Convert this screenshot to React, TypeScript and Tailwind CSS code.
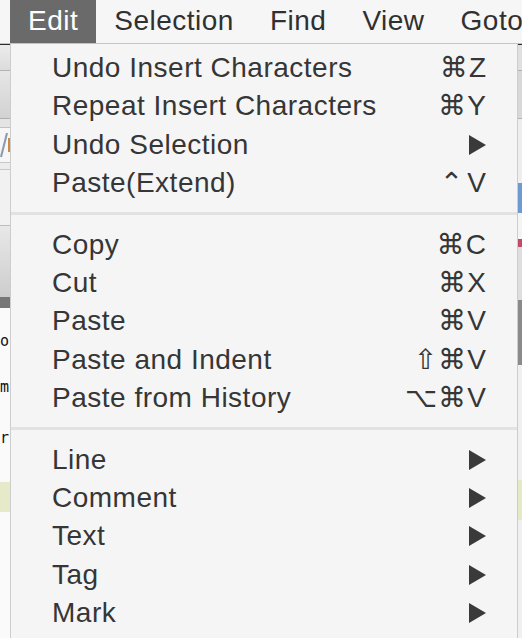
type Item = { label: string; keys?: string[]; sub?: boolean } | "sep";

const items: Item[] = [
  { label: "Undo Insert Characters", keys: ["⌘", "Z"] },
  { label: "Repeat Insert Characters", keys: ["⌘", "Y"] },
  { label: "Undo Selection", sub: true },
  { label: "Paste(Extend)", keys: ["⌃", "V"] },
  "sep",
  { label: "Copy", keys: ["⌘", "C"] },
  { label: "Cut", keys: ["⌘", "X"] },
  { label: "Paste", keys: ["⌘", "V"] },
  { label: "Paste and Indent", keys: ["⇧", "⌘", "V"] },
  { label: "Paste from History", keys: ["⌥", "⌘", "V"] },
  "sep",
  { label: "Line", sub: true },
  { label: "Comment", sub: true },
  { label: "Text", sub: true },
  { label: "Tag", sub: true },
  { label: "Mark", sub: true },
];

const bar = ["Edit", "Selection", "Find", "View", "Goto"];

function Arrow() {
  return (
    <svg width="17" height="20" viewBox="0 0 17 20" className="block">
      <polygon points="0,0 17,10 0,20" fill="#3a3a3a" />
    </svg>
  );
}

function MenuBar() {
  return (
    <div className="h-[44px] shrink-0 flex border-b border-[#c4c4c4] bg-[#f6f6f6] pl-[10px]">
      {bar.map((name, i) => (
        <div
          key={name}
          className={
            i === 0
              ? "px-[18px] leading-[41px] text-white bg-[#6a6a6a] whitespace-nowrap"
              : "px-[18px] leading-[41px] text-[#303030] whitespace-nowrap"
          }
        >
          {name}
        </div>
      ))}
    </div>
  );
}

function LeftStrip() {
  return (
    <div className="w-[10px] shrink-0 flex flex-col overflow-hidden font-['DejaVu_Sans_Mono',monospace] tracking-normal">
      <div className="h-[1px] bg-[#2a2a2a]" />
      <div className="h-[25px] bg-gradient-to-b from-[#ececec] to-[#dcdcdc]" />
      <div className="h-[1px] bg-[#b4b4b4]" />
      <div className="h-[47px] bg-gradient-to-b from-[#e6e6e6] to-[#d2d2d2]" />
      <div className="h-[1px] bg-[#b0b0b0]" />
      <div className="h-[8px] bg-[#e4e4e4]" />
      <div className="h-[1px] bg-[#c2c2c2]" />
      <div className="h-[34px] bg-[#f6f6f6] flex items-center">
        <svg width="8" height="28" viewBox="0 0 8 28" className="block">
          <line x1="7" y1="2" x2="1" y2="26" stroke="#8a9ab0" strokeWidth="2" />
        </svg>
        <span className="w-[2px] h-[14px] bg-[#c98a4a]" />
      </div>
      <div className="h-[1px] bg-[#c8c8c8]" />
      <div className="h-[6px] bg-[#ececec]" />
      <div className="h-[1px] bg-[#c8c8c8]" />
      <div className="h-[55px] bg-[#f1f1f1]" />
      <div className="h-[1px] bg-[#bdbdbd]" />
      <div className="h-[71px] bg-gradient-to-b from-[#e8e8e8] to-[#cdcdcd]" />
      <div className="h-[11px] bg-[#777777]" />
      <div className="flex-1 bg-[#fafafa] flex flex-col text-[15px] leading-none text-[#111]">
        <div className="h-[26px]" />
        <span>o</span>
        <div className="h-[31px]" />
        <span>m</span>
        <div className="h-[36px]" />
        <span>r</span>
        <div className="h-[36px]" />
        <div className="h-[30px] bg-[#e7eac8]" />
      </div>
    </div>
  );
}

function RightStrip() {
  return (
    <div className="w-[4px] shrink-0 flex flex-col overflow-hidden">
      <div className="h-[1px] bg-[#2a2a2a]" />
      <div className="h-[25px] bg-[#e0e0e0]" />
      <div className="h-[1px] bg-[#b4b4b4]" />
      <div className="h-[47px] bg-[#d8d8d8]" />
      <div className="h-[1px] bg-[#b0b0b0]" />
      <div className="h-[64px] bg-[#eeeeee]" />
      <div className="h-[30px] bg-[#6f9ad0]" />
      <div className="h-[26px] bg-[#f4f4f4]" />
      <div className="h-[8px] bg-[#c24a6a]" />
      <div className="h-[53px] bg-[#dedede]" />
      <div className="h-[65px] bg-[#8a8a8a]" />
      <div className="h-[115px] bg-[#f0f0f0]" />
      <div className="h-[40px] bg-[#e6e9c6]" />
      <div className="flex-1 bg-[#f0f0f0]" />
    </div>
  );
}

function Menu() {
  return (
    <div className="w-[508px] shrink-0 bg-[#f5f5f5] border-l border-r border-[#cdcdcd] pt-[5px]">
      {items.map((it, i) =>
        it === "sep" ? (
          <div key={i} className="h-[23.5px] flex items-center">
            <div className="w-full h-[3px] bg-[#e2e2e2]" />
          </div>
        ) : (
          <div
            key={i}
            className="h-[38.3px] leading-[38.3px] flex items-center justify-between pl-[41px] pr-[31px] text-[#363636]"
          >
            <span className="whitespace-nowrap">{it.label}</span>
            {it.sub ? (
              <Arrow />
            ) : (
              <span className="flex items-center whitespace-nowrap tracking-normal">
                {it.keys?.map((k, j) => (
                  <span key={j} className={k === "⌃" ? "mr-[4px]" : j < (it.keys?.length ?? 0) - 1 ? "mr-[1px]" : ""}>
                    {k}
                  </span>
                ))}
              </span>
            )}
          </div>
        )
      )}
    </div>
  );
}

export default function App() {
  return (
    <div className="w-[522px] h-[638px] overflow-hidden bg-[#f6f6f6] flex flex-col font-['Liberation_Sans','DejaVu_Sans',sans-serif] text-[28px] tracking-[0.5px]">
      <MenuBar />
      <div className="flex flex-1 min-h-0">
        <LeftStrip />
        <Menu />
        <RightStrip />
      </div>
    </div>
  );
}
